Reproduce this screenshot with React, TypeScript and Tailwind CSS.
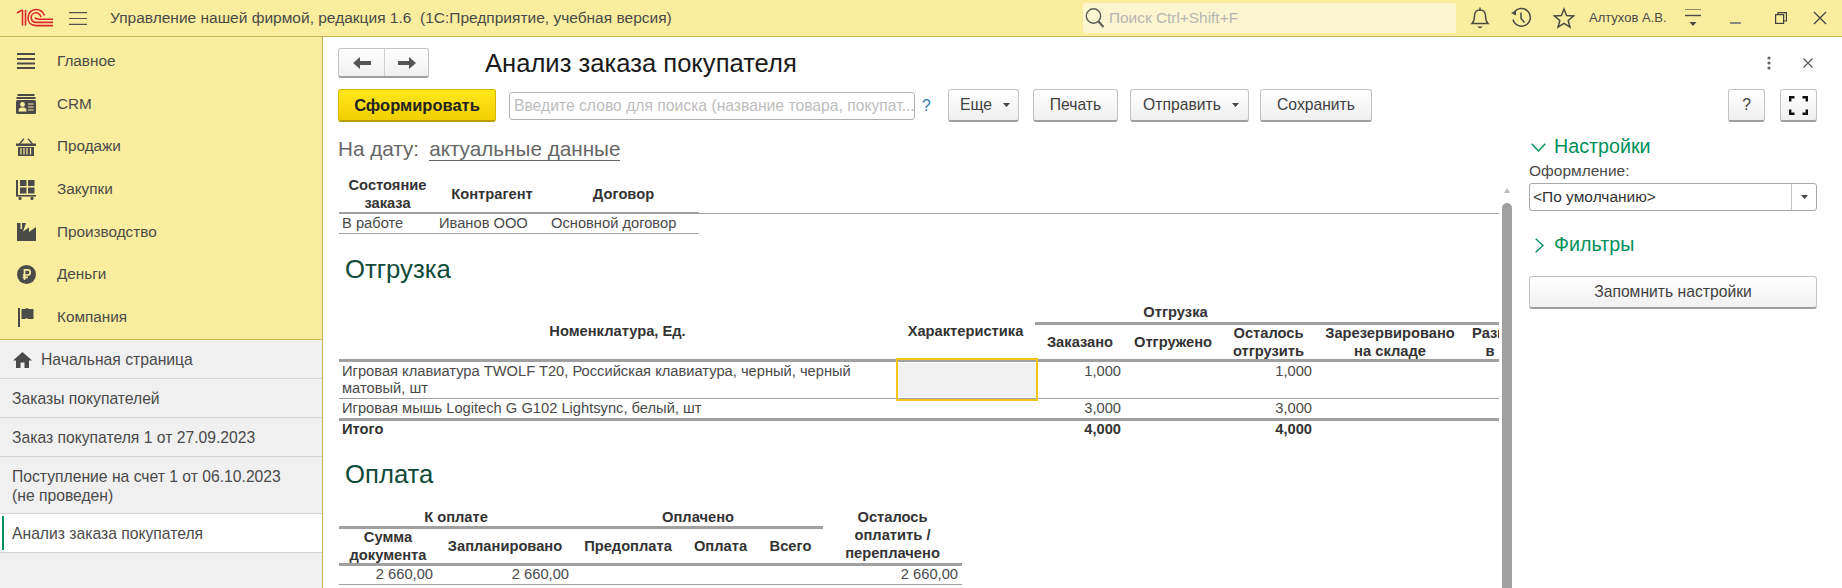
import type { ReactNode } from 'react';

const Logo = () => (
  <svg width="38" height="20" viewBox="0 0 38 20" fill="none" stroke="#d9262e" strokeWidth="1.6">
    <path d="M1 5 L5 2.5 H6.5 V17.5 M9.5 2 V17.5" />
    <path d="M37 17.6 H20 C14.5 17.6 12 14 12 10 C12 5 15.5 1.5 20 1.5 C24.5 1.5 27 4 28.5 7.5" />
    <path d="M37 14.4 H20.5 C17 14.4 15.2 12.5 15.2 9.8 C15.2 7 17.2 4.8 20 4.8 C22.5 4.8 24 6.5 25 9" />
    <path d="M37 11.2 H24 C21.5 11.2 19.5 11 19 9.5" />
  </svg>
);

const Burger = () => (
  <svg width="18" height="13" viewBox="0 0 18 13" stroke="#55524a" strokeWidth="1.2">
    <path d="M0 .6H18M0 6.5H18M0 12.4H18" />
  </svg>
);

const Search = () => (
  <svg width="22" height="24" viewBox="0 0 22 24" fill="none" stroke="#5b5b55" strokeWidth="1.4">
    <circle cx="9.5" cy="10" r="7.2" />
    <path d="M14.5 15.5 L19.5 21" strokeWidth="2" />
  </svg>
);

const Bell = () => (
  <svg width="20" height="24" viewBox="0 0 20 24" fill="none" stroke="#4a4a45" strokeWidth="1.4">
    <path d="M2 17.5 C4.5 15 4.5 13 4.5 10 C4.5 6.5 6.5 4 10 4 C13.5 4 15.5 6.5 15.5 10 C15.5 13 15.5 15 18 17.5 Z" />
    <path d="M10 1.5V4" />
    <path d="M7 20.5H13L10 22.5Z" fill="#4a4a45" stroke="none" />
  </svg>
);

const History = () => (
  <svg width="22" height="22" viewBox="0 0 22 22" fill="none" stroke="#4a4a45" strokeWidth="1.5">
    <path d="M4.2 5.5 A8.8 8.8 0 1 1 3 12.5" />
    <path d="M1 6 L6 3.5 L6 8.5 Z" fill="#4a4a45" stroke="none" />
    <path d="M11 5.5 V11.5 L14.5 15.5" />
  </svg>
);

const Star = () => (
  <svg width="22" height="22" viewBox="0 0 22 22" fill="none" stroke="#4a4a45" strokeWidth="1.5">
    <path d="M11 2 L13.6 8.6 L20.5 9 L15.2 13.4 L17 20.2 L11 16.4 L5 20.2 L6.8 13.4 L1.5 9 L8.4 8.6 Z" />
  </svg>
);

const FilterMenu = () => (
  <svg width="18" height="20" viewBox="0 0 18 20" stroke="#4a4a45">
    <path d="M1 1.5H17" strokeWidth="1" opacity=".6" />
    <path d="M1 7.5H17" strokeWidth="1.4" />
    <path d="M5.5 14H12.5L9 18Z" fill="#4a4a45" stroke="none" />
  </svg>
);

const Restore = () => (
  <svg width="12" height="12" viewBox="0 0 12 12" fill="none" stroke="#3f3f3f" strokeWidth="1.2">
    <rect x=".6" y="2.6" width="8" height="8.8" />
    <path d="M3 2.6V.6H11.4V9H8.6" />
  </svg>
);

const WinClose = () => (
  <svg width="14" height="14" viewBox="0 0 14 14" stroke="#444" strokeWidth="1.3">
    <path d="M1 1 L13 13 M13 1 L1 13" />
  </svg>
);

// иконки разделов слева
const sectionIcons: Record<string, ReactNode> = {
  main: (
    <svg width="20" height="18" viewBox="0 0 20 18" stroke="#4a4a48" strokeWidth="2.2">
      <path d="M1 2H19M1 7H19M1 11.5H19M1 16H19" />
    </svg>
  ),
  crm: (
    <svg width="20" height="20" viewBox="0 0 20 20" fill="#4a4a48">
      <rect x="1.5" y="0" width="17" height="2" />
      <rect x="0.5" y="3" width="19" height="2" />
      <path d="M1.5 6H18.5Q20 6 20 7.5V18.5Q20 20 18.5 20H1.5Q0 20 0 18.5V7.5Q0 6 1.5 6Z" />
      <circle cx="6.5" cy="10.5" r="2.4" fill="#fbed9e" />
      <path d="M2.5 17.5C2.5 14 4 13.5 6.5 13.5C9 13.5 10.5 14 10.5 17.5Z" fill="#fbed9e" />
      <path d="M12 10H17.5M12 13H17.5M12 16H17.5" stroke="#fbed9e" strokeWidth="1.2" />
    </svg>
  ),
  sales: (
    <svg width="20" height="18" viewBox="0 0 20 18" fill="#4a4a48">
      <path d="M3.5 6 L8 .8 M16.5 6 L12 .8" stroke="#4a4a48" strokeWidth="1.3" />
      <rect x="0" y="5.5" width="20" height="2.5" />
      <path d="M2 9H18V18H2Z" />
      <path d="M5 10V16.5M8 10V16.5M11 10V16.5M14.5 10V16.5" stroke="#fbed9e" strokeWidth="1.2" />
    </svg>
  ),
  purchase: (
    <svg width="20" height="20" viewBox="0 0 20 20" fill="#4a4a48">
      <rect x="0" y="0" width="2" height="15" />
      <rect x="4" y="0" width="6.5" height="6" />
      <rect x="12" y="0" width="6.5" height="6" />
      <rect x="4" y="7.5" width="6.5" height="6" />
      <rect x="12" y="7.5" width="6.5" height="6" />
      <rect x="0" y="15" width="20" height="1.6" />
      <circle cx="4" cy="18.4" r="1.6" />
      <circle cx="16" cy="18.4" r="1.6" />
    </svg>
  ),
  production: (
    <svg width="19" height="18" viewBox="0 0 19 18" fill="#4a4a48">
      <path d="M0 18V0H3.5V6L5 6V0H9L6 8.5L12 4.5V9L19 4V18Z" />
    </svg>
  ),
  money: (
    <svg width="19" height="19" viewBox="0 0 19 19">
      <circle cx="9.5" cy="9.5" r="9.5" fill="#4a4a48" />
      <path d="M7.5 15V4.8H10.8C14 4.8 14 10 10.8 10H5.8M5.8 12.4H11" fill="none" stroke="#fbed9e" strokeWidth="1.7" />
    </svg>
  ),
  company: (
    <svg width="16" height="19" viewBox="0 0 16 19" fill="#4a4a48">
      <rect x="0" y="0" width="2" height="19" />
      <path d="M3.5 1 H7 L9 0 L11 1 H15.5 V11 H10 L8.5 10 L7 11 H3.5Z" />
    </svg>
  ),
};

const sections = [
  { id: 'main', label: 'Главное' },
  { id: 'crm', label: 'CRM' },
  { id: 'sales', label: 'Продажи' },
  { id: 'purchase', label: 'Закупки' },
  { id: 'production', label: 'Производство' },
  { id: 'money', label: 'Деньги' },
  { id: 'company', label: 'Компания' },
];

const tabs = ['Заказы покупателей', 'Заказ покупателя 1 от 27.09.2023'];

function Btn({ children, className = '' }: { children: ReactNode; className?: string }) {
  return (
    <div
      className={`flex h-[33px] items-center justify-center rounded-[3px] border border-[#c4c4c4] border-b-[2px] border-b-[#9e9e9e] bg-gradient-to-b from-white to-[#f0f0f0] text-[15.7px] text-[#404040] ${className}`}
    >
      {children}
    </div>
  );
}

const Caret = ({ className = '' }: { className?: string }) => (
  <svg width="7" height="4" viewBox="0 0 7 4" className={className}>
    <path d="M0 0H7L3.5 4Z" fill="#444" />
  </svg>
);

const th = 'px-[3px] text-center align-middle font-bold text-[14.7px] leading-[18px] text-[#333]';
const td = 'px-[3px] py-px align-top text-[14.7px] leading-[17px] text-[#4a4a4a]';
const tdR = 'px-[4px] py-px align-top text-right text-[14.7px] leading-[17px] text-[#4a4a4a]';
const tdB = 'px-[4px] py-px align-top text-right text-[14.7px] leading-[17px] font-bold text-[#333]';
// двухстрочная шапка не должна раздувать строку
const tight = 'block -my-px';

function Sidebar() {
  return (
    <aside className="flex w-[323px] shrink-0 flex-col border-r border-[#c9b458] bg-[#f0f0f0]">
      <nav className="flex h-[303px] shrink-0 flex-col border-b border-[#c9b458] bg-[#fbed9e] pt-[3px]">
        {sections.map((s) => (
          <div key={s.id} className="flex h-[43px] items-center text-[15.3px] text-[#4a4a4a]">
            <span className="flex w-[57px] shrink-0 justify-center pl-[4px] pr-[9px]">{sectionIcons[s.id]}</span>
            {s.label}
          </div>
        ))}
      </nav>
      <div className="flex h-[39px] items-center gap-[9px] border-b border-[#d6d6d6] pl-[13px] pt-[2px] text-[15.7px] text-[#4a4a4a]">
        <svg width="19" height="16" viewBox="0 0 19 16" fill="#4a4a48">
          <path d="M9.5 0 L19 8.5 H16 V16 H11.5 V10.5 H7.5 V16 H3 V8.5 H0 Z" />
        </svg>
        Начальная страница
      </div>
      {tabs.map((t) => (
        <div key={t} className="flex h-[39px] items-center border-b border-[#d6d6d6] pl-[12px] pt-[2px] text-[15.7px] text-[#4a4a4a]">
          {t}
        </div>
      ))}
      <div className="flex h-[57px] items-center border-b border-[#d6d6d6] pl-[12px] pt-[2px] text-[15.7px] leading-[19px] text-[#4a4a4a]">
        <span>
          Поступление на счет 1 от 06.10.2023
          <br />
          (не проведен)
        </span>
      </div>
      <div className="flex h-[39px] items-center border-b border-[#d6d6d6] bg-white py-[2px] pl-[2px] text-[15.7px] text-[#4a4a4a]">
        <span className="h-full w-[2px] bg-[#00915a]" />
        <span className="pl-[8px] pt-[2px]">Анализ заказа покупателя</span>
      </div>
    </aside>
  );
}

function TopBar() {
  return (
    <header className="flex h-[37px] shrink-0 items-center border-b border-[#c9b458] bg-[#fbed9e]">
      <div className="ml-[16px] w-[53px]">
        <Logo />
      </div>
      <Burger />
      <span className="ml-[23px] w-[973px] whitespace-pre text-[15.5px] text-[#4a4a4a]">
        {'Управление нашей фирмой, редакция 1.6  (1С:Предприятие, учебная версия)'}
      </span>
      <div className="flex h-[30px] w-[373px] items-center rounded-[3px] bg-[#fdf6d0] pl-[1px] text-[15.4px] text-[#b5b5b0]">
        <Search />
        <span className="ml-[3px]">Поиск Ctrl+Shift+F</span>
      </div>
      <div className="ml-[14px]"><Bell /></div>
      <div className="ml-[20px]"><History /></div>
      <div className="ml-[21px]"><Star /></div>
      <span className="ml-[14px] text-[13px] text-[#4a4a4a]">Алтухов А.В.</span>
      <div className="ml-[17px]"><FilterMenu /></div>
      <div className="ml-[28px] mt-[10px] h-[2px] w-[11px] bg-[#8a8a80]" />
      <div className="ml-[34px]"><Restore /></div>
      <div className="ml-[26px]"><WinClose /></div>
    </header>
  );
}

function DocHead() {
  return (
    <table className="mt-[16px] w-[360px] table-fixed border-collapse">
      <colgroup>
        <col className="w-[97px]" />
        <col className="w-[112px]" />
        <col />
      </colgroup>
      <thead>
        <tr className="h-[37px] border-b-2 border-[#a0a0a0]">
          <th className={th}>Состояние заказа</th>
          <th className={th}>Контрагент</th>
          <th className={th}>Договор</th>
        </tr>
      </thead>
      <tbody>
        <tr className="border-b border-[#a0a0a0]">
          <td className={td}>В работе</td>
          <td className={`${td} whitespace-nowrap`}>Иванов ООО</td>
          <td className={`${td} whitespace-nowrap`}>Основной договор</td>
        </tr>
      </tbody>
    </table>
  );
}

function ShipTable() {
  return (
    <table className="mt-[20px] w-[1177px] table-fixed border-collapse">
      <colgroup>
        <col className="w-[557px]" />
        <col className="w-[139px]" />
        <col className="w-[90px]" />
        <col className="w-[96px]" />
        <col className="w-[95px]" />
        <col className="w-[148px]" />
        <col className="w-[52px]" />
      </colgroup>
      <thead>
        <tr className="h-[20px]">
          <th rowSpan={2} className={th}>Номенклатура, Ед.</th>
          <th rowSpan={2} className={th}>Характеристика</th>
          <th colSpan={3} className={`${th} border-b-[3px] border-[#a0a0a0]`}>Отгрузка</th>
          <th colSpan={2} className="border-b-[3px] border-[#a0a0a0]" />
        </tr>
        <tr className="h-[35px] border-b-[3px] border-[#a0a0a0]">
          <th className={th}>Заказано</th>
          <th className={th}>Отгружено</th>
          <th className={th}><span className={tight}>Осталось<br />отгрузить</span></th>
          <th className={th}><span className={tight}>Зарезервировано<br />на складе</span></th>
          <th className={`${th} overflow-hidden whitespace-nowrap`}><span className={tight}>Разм<br />в</span></th>
        </tr>
      </thead>
      <tbody>
        <tr className="h-[35px] border-b border-[#a0a0a0]">
          <td className={td}>Игровая клавиатура TWOLF T20, Российская клавиатура, черный, черный матовый, шт</td>
          <td className="relative p-0">
            <div className="absolute -top-[4px] -bottom-[3px] left-0 -right-[3px] border-2 border-[#f5c518]">
              <div className="absolute inset-x-0 top-[3px] bottom-[2px] bg-[#f0f0f0]" />
            </div>
          </td>
          <td className={tdR}>1,000</td>
          <td />
          <td className={tdR}>1,000</td>
          <td />
          <td />
        </tr>
        <tr className="border-b-[3px] border-[#a0a0a0]">
          <td className={td}>Игровая мышь Logitech G G102 Lightsync, белый, шт</td>
          <td />
          <td className={tdR}>3,000</td>
          <td />
          <td className={tdR}>3,000</td>
          <td />
          <td />
        </tr>
        <tr>
          <td className={`${td} pt-0 font-bold text-[#333]`}>Итого</td>
          <td />
          <td className={`${tdB} pt-0`}>4,000</td>
          <td />
          <td className={`${tdB} pt-0`}>4,000</td>
          <td />
          <td />
        </tr>
      </tbody>
    </table>
  );
}

function PayTable() {
  return (
    <table className="mt-[20px] w-[623px] table-fixed border-collapse">
      <colgroup>
        <col className="w-[98px]" />
        <col className="w-[136px]" />
        <col className="w-[110px]" />
        <col className="w-[75px]" />
        <col className="w-[65px]" />
        <col />
      </colgroup>
      <thead>
        <tr className="h-[20px]">
          <th colSpan={2} className={`${th} border-b-[3px] border-[#a0a0a0]`}>К оплате</th>
          <th colSpan={3} className={`${th} border-b-[3px] border-[#a0a0a0]`}>Оплачено</th>
          <th rowSpan={2} className={`${th} border-b-[3px] border-[#a0a0a0]`}>Осталось<br />оплатить /<br />переплачено</th>
        </tr>
        <tr className="h-[35px] border-b-[3px] border-[#a0a0a0]">
          <th className={th}><span className={tight}>Сумма<br />документа</span></th>
          <th className={th}>Запланировано</th>
          <th className={th}>Предоплата</th>
          <th className={th}>Оплата</th>
          <th className={th}>Всего</th>
        </tr>
      </thead>
      <tbody>
        <tr className="border-b border-[#a0a0a0]">
          <td className={`${tdR} pt-0`}>2 660,00</td>
          <td className={`${tdR} pt-0`}>2 660,00</td>
          <td />
          <td />
          <td />
          <td className={`${tdR} pt-0`}>2 660,00</td>
        </tr>
      </tbody>
    </table>
  );
}

function SettingsPanel() {
  return (
    <aside className="ml-[17px] flex w-[288px] shrink-0 flex-col text-[15.5px] text-[#4a4a4a]">
      <div className="flex h-[22px] items-center gap-[8px] pl-[2px] text-[19.7px] text-[#00915a]">
        <svg width="15" height="9" viewBox="0 0 15 9" fill="none" stroke="#00915a" strokeWidth="1.4">
          <path d="M.7 .7 L7.5 8 L14.3 .7" />
        </svg>
        Настройки
      </div>
      <div className="mt-[1px] h-[19px]">Оформление:</div>
      <div className="mt-[5px] flex h-[28px] items-center rounded-[3px] border border-[#a8a8a8] pl-[3px] text-[#333]">
        <span className="flex-1">&lt;По умолчанию&gt;</span>
        <span className="flex h-full w-[25px] items-center justify-center border-l border-[#c4c4c4]">
          <Caret />
        </span>
      </div>
      <div className="mt-[23px] flex h-[22px] items-center gap-[10px] pl-[6px] text-[19.7px] text-[#00915a]">
        <svg width="9" height="15" viewBox="0 0 9 15" fill="none" stroke="#00915a" strokeWidth="1.4">
          <path d="M.7 .7 L8 7.5 L.7 14.3" />
        </svg>
        Фильтры
      </div>
      <Btn className="mt-[20px] w-full">Запомнить настройки</Btn>
    </aside>
  );
}

export default function App() {
  return (
    <div className="flex h-[588px] w-[1842px] flex-col overflow-hidden bg-white font-['Liberation_Sans',Arial,sans-serif]">
      <TopBar />
      <div className="flex min-h-0 flex-1">
        <Sidebar />
        <main className="flex min-w-0 flex-1 flex-col pl-[15px] pr-[25px] pt-[11px]">
          <div className="flex h-[30px] items-center">
            <div className="flex h-[30px] w-[91px] rounded-[3px] border border-[#c4c4c4] border-b-[2px] border-b-[#9e9e9e] bg-gradient-to-b from-white to-[#f0f0f0]">
              <span className="flex w-[46px] items-center justify-center border-r border-[#d0d0d0]">
                <svg width="18" height="12" viewBox="0 0 18 12" fill="#555"><path d="M0 6 L7 0 V4 H18 V8 H7 V12Z" /></svg>
              </span>
              <span className="flex flex-1 items-center justify-center">
                <svg width="18" height="12" viewBox="0 0 18 12" fill="#555"><path d="M18 6 L11 0 V4 H0 V8 H11 V12Z" /></svg>
              </span>
            </div>
            <h1 className="ml-[56px] text-[25.6px] text-[#1a1a1a]">Анализ заказа покупателя</h1>
            <div className="ml-auto flex items-center gap-[32px] pr-[4px]">
              <svg width="4" height="14" viewBox="0 0 4 14" fill="#666"><circle cx="2" cy="2" r="1.6" /><circle cx="2" cy="7" r="1.6" /><circle cx="2" cy="12" r="1.6" /></svg>
              <svg width="10" height="10" viewBox="0 0 10 10" stroke="#555" strokeWidth="1.1"><path d="M.5 .5 L9.5 9.5 M9.5 .5 L.5 9.5" /></svg>
            </div>
          </div>

          <div className="mt-[11px] flex h-[33px] items-center">
            <div className="flex h-[33px] w-[158px] items-center justify-center rounded-[3px] border border-[#d4b800] border-b-[2px] border-b-[#b89e00] bg-gradient-to-b from-[#ffe81a] to-[#f2cf00] text-[16.5px] font-bold text-[#222]">
              Сформировать
            </div>
            <div className="ml-[13px] flex h-[28px] w-[406px] items-center overflow-hidden rounded-[3px] border border-[#b0b0b0] pl-[4px] text-[15.7px] whitespace-nowrap text-[#bdbdbd]">
              Введите слово для поиска (название товара, покупат...
            </div>
            <span className="ml-[7px] w-[26px] text-[15.7px] text-[#2a7ab8]">?</span>
            <Btn className="w-[71px] gap-[11px] pl-[3px]">Еще<Caret /></Btn>
            <Btn className="ml-[14px] w-[85px]">Печать</Btn>
            <Btn className="ml-[12px] w-[119px] gap-[11px] pl-[3px]">Отправить<Caret /></Btn>
            <Btn className="ml-[11px] w-[112px]">Сохранить</Btn>
            <Btn className="ml-auto w-[37px]">?</Btn>
            <Btn className="ml-[15px] w-[37px]">
              <svg width="19" height="19" viewBox="0 0 19 19" fill="none" stroke="#111" strokeWidth="2.4">
                <path d="M1.2 5.5V1.2H5.5M13.5 1.2H17.8V5.5M17.8 13.5V17.8H13.5M5.5 17.8H1.2V13.5" />
              </svg>
            </Btn>
          </div>

          <div className="flex min-h-0 flex-1">
            <div className="flex min-w-0 flex-1 flex-col">
              <div className="mt-[16px] flex h-[22px] items-center text-[20.7px] text-[#666]">
                На дату:
                <span className="ml-[10px] border-b border-[#666] leading-[22px]">актуальные данные</span>
              </div>
              <div className="flex min-h-0 flex-1">
                <div className="min-w-0 flex-1 overflow-hidden pl-[1px]">
                  <div className="relative">
                    <div className="absolute top-[37px] left-0 right-0 h-[1px] bg-[#a0a0a0]" />
                    <DocHead />
                  </div>
                  <h2 className="mt-[21px] h-[28px] pl-[6px] text-[25.7px] leading-[28px] text-[#0f4a38]">Отгрузка</h2>
                  <ShipTable />
                  <h2 className="mt-[21px] h-[28px] pl-[6px] text-[25.7px] leading-[28px] text-[#0f4a38]">Оплата</h2>
                  <PayTable />
                </div>
                <div className="relative ml-[3px] w-[10px] shrink-0">
                  <svg width="6" height="5" viewBox="0 0 6 5" className="absolute top-[28px] left-[2px]"><path d="M3 0L6 5H0Z" fill="#bbb" /></svg>
                  <div className="absolute top-[43px] bottom-0 left-0 w-[10px] rounded-t-[5px] bg-[#a0a0a0]" />
                </div>
              </div>
            </div>
            <div className="pt-[14px]">
              <SettingsPanel />
            </div>
          </div>
        </main>
      </div>
    </div>
  );
}
